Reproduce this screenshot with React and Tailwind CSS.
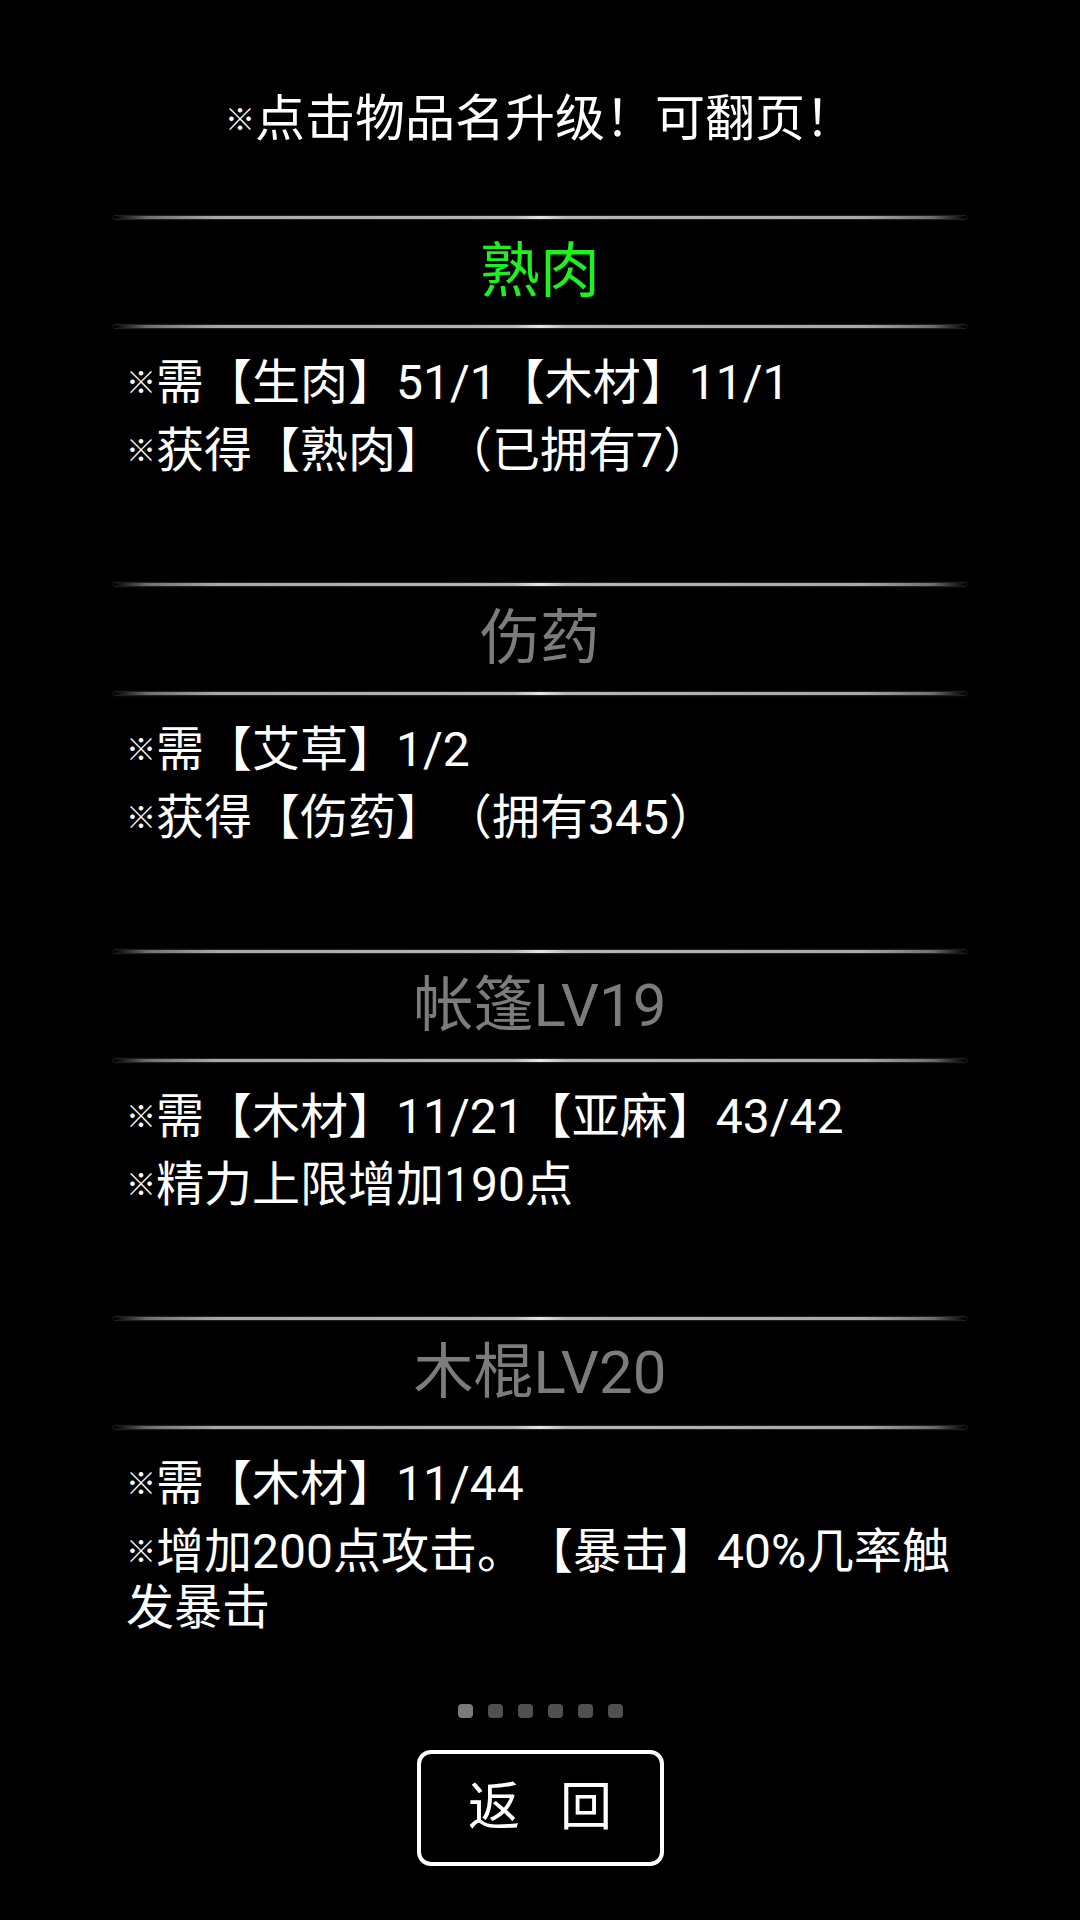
// App.jsx
const FONT = { fontFamily: 'Roboto, "Noto Sans CJK SC", sans-serif' };

const ITEMS = [
  { name: '熟肉', active: true, lines: ['需【生肉】51/1【木材】11/1', '获得【熟肉】（已拥有7）'] },
  { name: '伤药', active: false, lines: ['需【艾草】1/2', '获得【伤药】（拥有345）'] },
  { name: '帐篷LV19', active: false, lines: ['需【木材】11/21【亚麻】43/42', '精力上限增加190点'] },
  { name: '木棍LV20', active: false, lines: ['需【木材】11/44', '增加200点攻击。【暴击】40%几率触发暴击'] },
];

// the reference mark is drawn narrow, about half a CJK cell
function Mark() {
  return <span className="inline-block w-[30px] text-[30px] leading-none align-[6px] font-bold">※</span>;
}

function Divider() {
  return (
    <div className="h-[3px] w-full bg-[linear-gradient(90deg,transparent_0%,#6f6f6f_4%,#a8a8a8_12%,#b8b8b8_47%,#e6e6e6_50%,#b8b8b8_53%,#a8a8a8_88%,#6f6f6f_96%,transparent_100%)] shadow-[0_0_2px_#777]" />
  );
}

function ItemBlock({ item }) {
  return (
    <div className="h-[367px] flex flex-col">
      <Divider />
      <div className="h-[106px] flex items-center justify-center">
        <span className={`text-[60px] leading-none ${item.active ? 'text-[#1ff01f]' : 'text-[#7c7c7c]'}`}>{item.name}</span>
      </div>
      <Divider />
      <div className="pt-[27px] pl-[12px] pr-[8px] flex flex-col gap-[12px]">
        {item.lines.map(l => (
          <p key={l} className="text-[48px] leading-[56px] text-white"><Mark />{l}</p>
        ))}
      </div>
    </div>
  );
}

export default function App() {
  return (
    <div className="w-[1080px] h-[1920px] bg-black text-white overflow-hidden [text-spacing-trim:space-all]" style={FONT}>
      <div className="h-[216px] pt-[89px] text-center text-[50px] leading-[60px] text-white">
        <Mark />点击物品名升级！可翻页！
      </div>
      <div className="w-[852px] mx-auto">
        {ITEMS.map(it => <ItemBlock key={it.name} item={it} />)}
      </div>
      <div className="mt-[20px] flex justify-center gap-[15px]">
        {[0, 1, 2, 3, 4, 5].map(i => (
          <div key={i} className={`w-[15px] h-[14px] rounded-[4px] ${i === 0 ? 'bg-[#7a7a7a]' : 'bg-[#505050]'}`} />
        ))}
      </div>
      <div className="mt-[32px] flex justify-center">
        <button className="w-[247px] h-[116px] border-[4px] border-white rounded-[14px] flex items-center justify-center gap-[40px] text-[52px] leading-none text-white bg-black">
          <span>返</span>
          <span>回</span>
        </button>
      </div>
    </div>
  );
}
